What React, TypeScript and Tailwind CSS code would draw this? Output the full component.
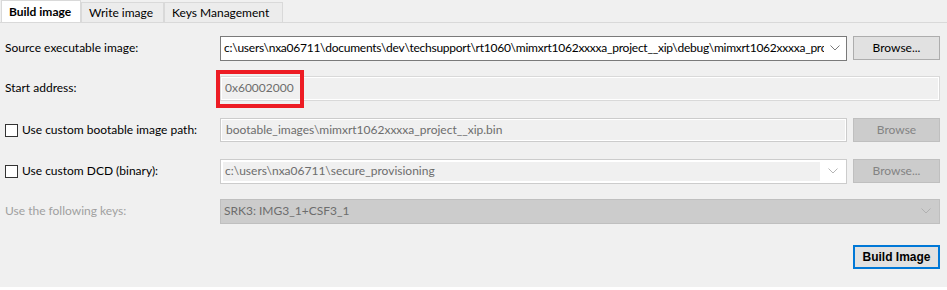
import React from "react"

const font = { fontFamily: 'Lato, "Noto Sans", sans-serif' }

function Chevron({ className }: { className?: string }) {
  return (
    <svg width="10" height="6" viewBox="0 0 10 6" className={className}>
      <path d="M0.5 0.5 L5 5 L9.5 0.5" fill="none" stroke="currentColor" strokeWidth="1" />
    </svg>
  )
}

function Checkbox() {
  return <span className="inline-block h-[13px] w-[13px] shrink-0 border border-[#333] bg-white" />
}

function Row({ children, className }: { children: React.ReactNode; className?: string }) {
  return <div className={"flex h-[24px] items-center " + (className ?? "")}>{children}</div>
}

export default function App() {
  const tabs = [
    { label: "Build image", active: true, w: "w-[80px]" },
    { label: "Write image", active: false, w: "w-[83px]" },
    { label: "Keys Management", active: false, w: "w-[119px]" },
  ]

  return (
    <div className="h-[290px] w-[947px] overflow-hidden bg-white text-[12px] text-black" style={font}>
      <div className="flex h-[23px] items-end border-b border-[#d9d9d9] bg-[#f0f0f0] pl-[1px]">
        {tabs.map((t) => (
          <div
            key={t.label}
            className={
              "flex items-center whitespace-nowrap border border-b-0 border-[#d9d9d9] px-[7px] " +
              t.w +
              (t.active ? " h-[22px] bg-white font-bold" : " h-[20px] bg-[#ececec]")
            }
          >
            {t.label}
          </div>
        ))}
      </div>

      <div className="flex h-[264px] flex-col bg-[#f0f0f0] pl-[5px] pr-[7px] pt-[13px]">
        <Row>
          <span className="w-[215px] shrink-0">Source executable image:</span>
          <div className="flex h-[25px] min-w-0 flex-1 items-center border border-[#7a7a7a] bg-white pl-[3px] pr-[6px]">
            <div className="min-w-0 flex-1 overflow-hidden">
              <span className="block overflow-hidden whitespace-nowrap tracking-[-0.25px]">
                c:\users\nxa06711\documents\dev\techsupport\rt1060\mimxrt1062xxxxa_project__xip\debug\mimxrt1062xxxxa_pro
              </span>
            </div>
            <Chevron className="ml-[6px] shrink-0 text-[#7a7a7a]" />
          </div>
          <button className="ml-[6px] h-[24px] w-[87px] shrink-0 border border-[#adadad] bg-[#e1e1e1]">Browse...</button>
        </Row>

        <Row className="mt-[16px]">
          <span className="w-[215px] shrink-0">Start address:</span>
          <div className="relative flex h-[25px] flex-1 items-center border border-[#d9d9d9] bg-[#f0f0f0] pl-[4px] text-[#6d6d6d]">
            <span className="absolute inset-0 border border-white" />
            <span className="relative">0x60002000</span>
            <span className="absolute left-[-5px] top-[-7px] h-[38px] w-[88px] border-[4px] border-[#ed1c24]" />
          </div>
        </Row>

        <Row className="mt-[18px]">
          <label className="flex w-[215px] shrink-0 items-center gap-[4px]">
            <Checkbox />
            Use custom bootable image path:
          </label>
          <div className="relative flex h-[24px] min-w-0 flex-1 items-center border border-[#cccccc] bg-[#f0f0f0] pl-[5px] text-[#6d6d6d]">
            <span className="absolute inset-0 border border-white" />
            <span className="relative">bootable_images\mimxrt1062xxxxa_project__xip.bin</span>
          </div>
          <button className="ml-[6px] h-[24px] w-[87px] shrink-0 border border-[#bfbfbf] bg-[#cccccc] text-[#838383]">Browse</button>
        </Row>

        <Row className="mt-[17px]">
          <label className="flex w-[215px] shrink-0 items-center gap-[4px]">
            <Checkbox />
            Use custom DCD (binary):
          </label>
          <div className="flex h-[25px] min-w-0 flex-1 items-center border border-[#cccccc] bg-white p-[2px] pr-[8px] text-[#6d6d6d]">
            <div className="flex h-full flex-1 items-center bg-[#f0f0f0] pl-[2px]">c:\users\nxa06711\secure_provisioning</div>
            <Chevron className="ml-[8px] shrink-0 text-[#b5b5b5]" />
          </div>
          <button className="ml-[6px] h-[24px] w-[87px] shrink-0 border border-[#bfbfbf] bg-[#cccccc] text-[#838383]">Browse...</button>
        </Row>

        <Row className="mt-[16px]">
          <span className="w-[215px] shrink-0 text-[#a0a0a0]">Use the following keys:</span>
          <div className="flex h-[25px] flex-1 items-center border border-[#bfbfbf] bg-[#cccccc] pl-[3px] pr-[8px] text-[#6d6d6d]">
            <span className="flex-1">SRK3: IMG3_1+CSF3_1</span>
            <Chevron className="shrink-0 text-[#b0b0b0]" />
          </div>
        </Row>

        <div className="mt-[22px] flex justify-end">
          <button
            className="h-[24px] w-[87px] border-2 border-[#0078d7] bg-[#e1e1e1] text-[12px] font-bold"
            style={{ fontFamily: '"Liberation Sans", Arial, sans-serif' }}
          >
            Build Image
          </button>
        </div>
      </div>
    </div>
  )
}
